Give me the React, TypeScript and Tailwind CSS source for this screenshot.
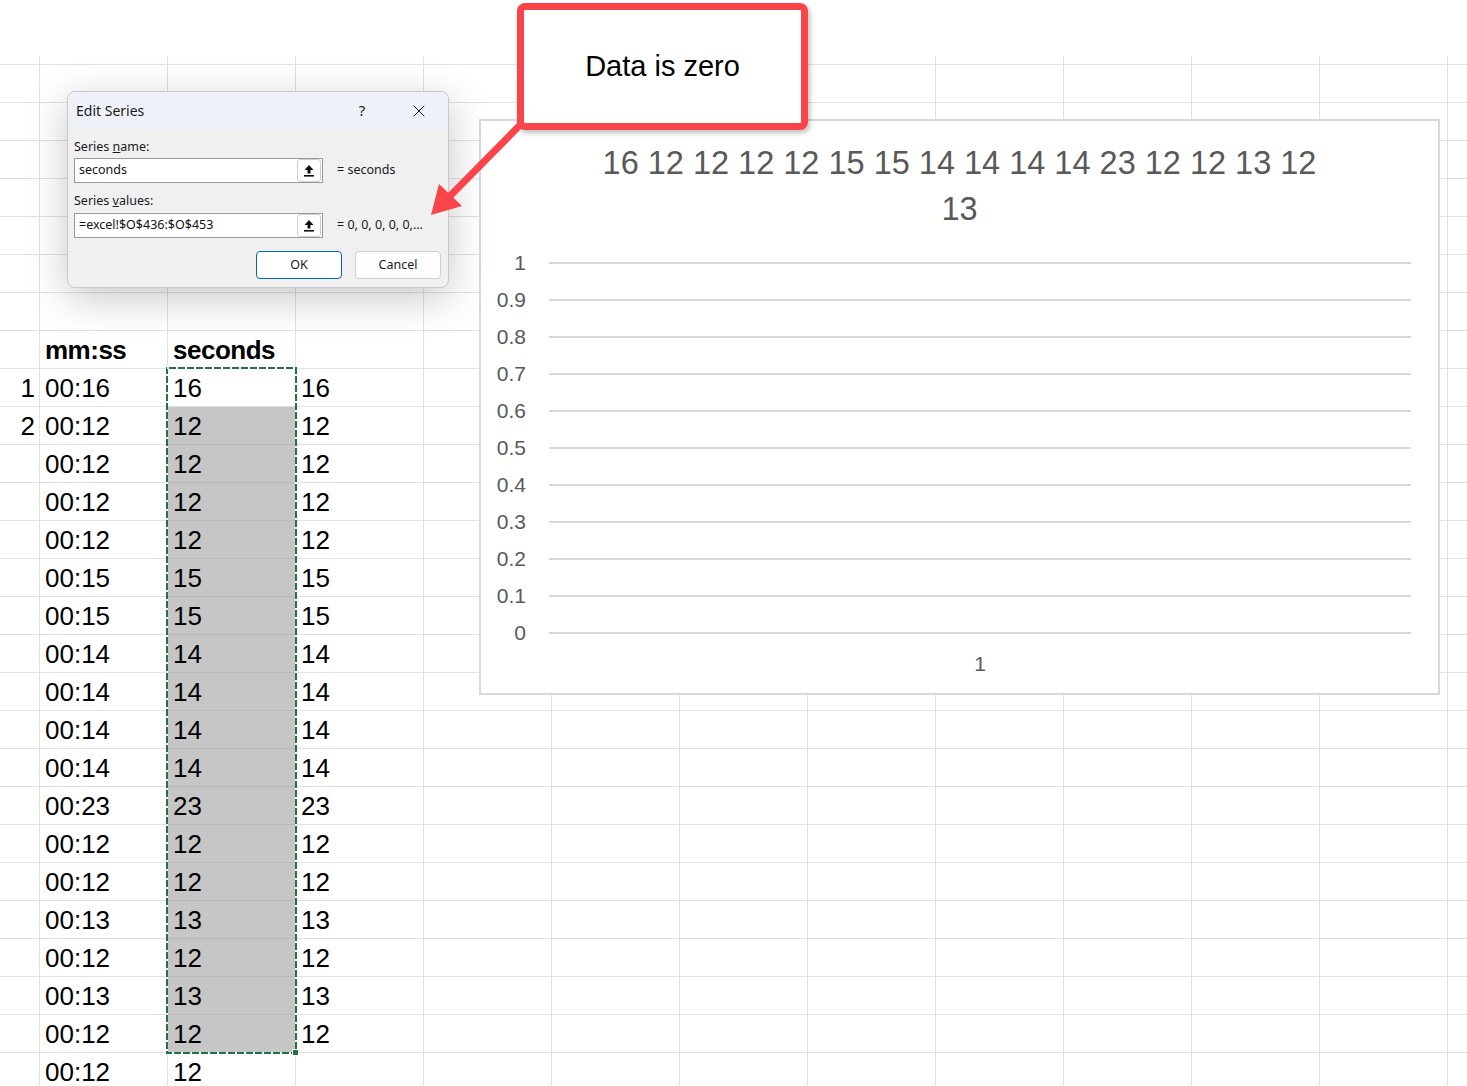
import { X } from 'lucide-react'

const seconds = [16, 12, 12, 12, 12, 15, 15, 14, 14, 14, 14, 23, 12, 12, 13, 12, 13, 12, 12]
const COLS = 13
const ROWS = 28
const HEADER_ROW = 8
const FIRST_DATA = 9

function cellText(r: number, c: number) {
  if (r === HEADER_ROW) {
    if (c === 1) return 'mm:ss'
    if (c === 2) return 'seconds'
    return ''
  }
  const i = r - FIRST_DATA
  if (i < 0 || i >= seconds.length) return ''
  if (c === 0) return i < 2 ? String(i + 1) : ''
  if (c === 1) return `00:${seconds[i]}`
  if (c === 2) return String(seconds[i])
  if (c === 3) return i < 18 ? String(seconds[i]) : ''
  return ''
}

function Sheet() {
  const cells = []
  for (let r = 0; r < ROWS; r++) {
    for (let c = 0; c < COLS; c++) {
      const i = r - FIRST_DATA
      const gray = c === 2 && i >= 1 && i < 18
      const text = cellText(r, c)
      cells.push(
        <div
          key={`${r}-${c}`}
          className={`flex items-end whitespace-nowrap border-r border-b pb-[5px] text-[26px] leading-none text-black ${
            gray ? 'bg-[#c6c6c6] border-[#b9b9b9]' : 'border-[#e1e1e1]'
          } ${c === 0 ? 'justify-end pr-[4px]' : 'pl-[5px]'} ${r === HEADER_ROW ? 'font-bold tracking-[-0.5px]' : ''}`}
        >
          {text}
        </div>
      )
    }
  }
  return (
    <div className="grid grid-cols-[40px_repeat(11,128px)_20px] grid-rows-[9px_repeat(27,38px)]">
      {cells}
    </div>
  )
}

function UploadIcon() {
  return (
    <svg width="12" height="13" viewBox="0 0 12 13">
      <path d="M6 1 L10.5 6 H7.5 V9.5 H4.5 V6 H1.5 Z" fill="#111" />
      <rect x="1" y="11" width="10" height="1.6" fill="#111" />
    </svg>
  )
}

function RefInput({ value }: { value: string }) {
  return (
    <div className="flex h-[25px] w-[249px] items-center border border-[#9a9a9a] bg-white">
      <span className="flex-1 pl-[4px] text-[12.5px] text-[#111]">{value}</span>
      <div className="mr-[1px] flex h-[23px] w-[24px] items-center justify-center rounded-[3px] border border-[#cfcfcf] bg-white">
        <UploadIcon />
      </div>
    </div>
  )
}

function EditSeriesDialog() {
  return (
    <div
      className="absolute left-[67px] top-[91px] flex h-[197px] w-[382px] flex-col overflow-hidden rounded-[8px] border border-[#c9c9c9] bg-[#f0f0f0] text-[#1a1a1a] shadow-[0_10px_40px_rgba(0,0,0,0.22)]"
      style={{ fontFamily: '"Noto Sans", "Open Sans", sans-serif' }}
    >
      <div className="flex h-[37px] items-center bg-[#eef1f8] pl-[8px]">
        <span className="flex-1 text-[14px]">Edit Series</span>
        <span className="w-[20px] text-center text-[15px]">?</span>
        <span className="ml-[37px] mr-[19px] flex w-[20px] justify-center">
          <X size={20} strokeWidth={1.2} />
        </span>
      </div>
      <div className="flex flex-col px-[6px] pt-[9px]">
        <span className="text-[12.5px] leading-[18px]">
          Series <span className="underline">n</span>ame:
        </span>
        <div className="mt-[2px] flex items-center gap-[14px]">
          <RefInput value="seconds" />
          <span className="text-[12.5px]">= seconds</span>
        </div>
        <span className="mt-[9px] text-[12.5px] leading-[18px]">
          Series <span className="underline">v</span>alues:
        </span>
        <div className="mt-[3px] flex items-center gap-[14px]">
          <RefInput value="=excel!$O$436:$O$453" />
          <span className="text-[12.5px]">= 0, 0, 0, 0, 0,...</span>
        </div>
        <div className="mt-[13px] flex justify-end gap-[13px] pr-[1px]">
          <button className="h-[28px] w-[86px] rounded-[4px] border border-[#0067c0] bg-white text-[12.5px]">OK</button>
          <button className="h-[28px] w-[86px] rounded-[4px] border border-[#d0d0d0] bg-[#fdfdfd] text-[12.5px]">Cancel</button>
        </div>
      </div>
    </div>
  )
}

function Chart() {
  const ticks = ['1', '0.9', '0.8', '0.7', '0.6', '0.5', '0.4', '0.3', '0.2', '0.1', '0']
  return (
    <div className="absolute left-[479px] top-[119px] flex h-[576px] w-[961px] flex-col border-2 border-[#d9d9d9] bg-white text-[#595959]">
      <div className="mt-[19px] text-center text-[32.5px] leading-[46px]">
        16 12 12 12 12 15 15 14 14 14 14 23 12 12 13 12
        <br />
        13
      </div>
      <div className="mt-[12px] flex flex-col">
        {ticks.map((t) => (
          <div key={t} className="flex h-[37px] items-center">
            <span className="w-[45px] text-right text-[21px]">{t}</span>
            <div className="ml-[23px] mr-[27px] h-[2px] flex-1 bg-[#d9d9d9]" />
          </div>
        ))}
      </div>
      <div className="flex h-[26px] items-center pl-[68px] pr-[27px]">
        <span className="flex-1 text-center text-[21px]">1</span>
      </div>
    </div>
  )
}

function Callout() {
  return (
    <>
      <div className="absolute left-[517px] top-[3px] flex h-[127px] w-[291px] items-center justify-center rounded-[8px] border-[7px] border-[#f94449] bg-white shadow-[2px_3px_5px_rgba(0,0,0,0.25)]">
        <span className="mt-[1px] text-[29px] text-black">Data is zero</span>
      </div>
      <svg className="absolute left-[420px] top-[110px]" width="120" height="120" viewBox="420 110 120 120">
        <line x1="522" y1="123" x2="449" y2="197" stroke="#f94449" strokeWidth="7" />
        <polygon points="431,215 439,184 462,206" fill="#f94449" />
      </svg>
    </>
  )
}

function Selection() {
  return (
    <>
      <svg className="absolute left-[166px] top-[367px]" width="132" height="688">
        <rect x="1" y="1" width="129" height="685" fill="none" stroke="#217346" strokeWidth="2" />
        <rect x="1" y="1" width="129" height="685" fill="none" stroke="#ffffff" strokeWidth="2" strokeDasharray="2 7" />
      </svg>
      <div className="absolute left-[292px] top-[1049px] h-[7px] w-[7px] border border-white bg-[#217346]" />
    </>
  )
}

export default function App() {
  return (
    <div
      className="relative h-[1086px] w-[1467px] overflow-hidden bg-white"
      style={{ fontFamily: '"Liberation Sans", Arial, sans-serif' }}
    >
      <div className="h-[56px]" />
      <Sheet />
      <Selection />
      <Chart />
      <EditSeriesDialog />
      <Callout />
    </div>
  )
}
